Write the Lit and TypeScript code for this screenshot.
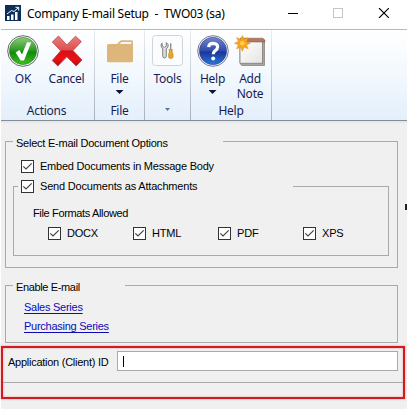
import { LitElement, html, svg, css } from "lit";
import { customElement, property } from "lit/decorators.js";

@customElement("check-item")
class CheckItem extends LitElement {
  @property() label = "";
  static styles = css`
    :host { display: flex; align-items: center; height: 13px; white-space: nowrap; }
    svg { flex: none; width: 13px; height: 13px; }
    .text { margin-left: 6px; line-height: 13px; }
  `;
  render() {
    return html`<svg viewBox="0 0 13 13">
        <rect x=".5" y=".5" width="12" height="12" fill="#fff" stroke="#333" />
        <path d="M2.3 6.3 5 9 10.7 3.3" fill="none" stroke="#444" stroke-width="1.2" />
      </svg><span class="text">${this.label}</span>`;
  }
}

const okIcon = svg`
  <defs>
    <linearGradient id="g" x2="0" y2="1"><stop stop-color="#8fc97c"/><stop offset=".45" stop-color="#2f9e25"/><stop offset=".55" stop-color="#128a0c"/><stop offset="1" stop-color="#3fc01e"/></linearGradient>
  </defs>
  <circle cx="16" cy="16" r="15.3" fill="#fff" stroke="#555" stroke-width=".9"/>
  <circle cx="16" cy="16" r="13.6" fill="url(#g)" stroke="#277a22" stroke-width=".6"/>
  <path d="M8.6 17.4 12.4 15 15 19.4 20 7.2 24.2 7.4 17 25.4 13.6 25.4Z" fill="#fff"/>`;

const cancelIcon = svg`
  <defs>
    <linearGradient id="r" x2="0" y2="1"><stop stop-color="#e98080"/><stop offset=".46" stop-color="#e04f4f"/><stop offset=".5" stop-color="#d31116"/><stop offset=".75" stop-color="#ed1113"/><stop offset="1" stop-color="#a80e12"/></linearGradient>
  </defs>
  <path d="M7.5 1 15.8 10 24.5 1.2 30.3 6.6 22 15.6 31 25 25.2 31 15.8 21.8 6.8 31 1.2 25.5 9.7 15.8 1.3 7Z" fill="url(#r)" stroke="#b84347" stroke-width=".8" stroke-linejoin="round"/>`;

const folderIcon = svg`
  <path d="M3 10.5Q3 9 4.5 9H13L15.7 6.2Q16.4 5.3 17.5 5.3H27.5Q29 5.3 29 7V26Q29 27.3 27.7 27.3H4.3Q3 27.3 3 26Z" fill="#dcb67a"/>
  <path d="M15.6 9 17.5 7H27.4V9Z" fill="#f4f8fc"/>`;

const toolsIcon = svg`
  <rect x=".5" y=".5" width="30" height="30" rx="3" fill="#fbfcfe" stroke="#d0d4da"/>
  <path d="M10.2 8.2V11L12.2 12.4 14.3 11V7.6Q17 9 16 12L14.3 14V21Q14 23 12.4 23T10.7 21V14Q8.5 12 9.2 9Z" fill="#ddd" stroke="#666" stroke-width=".8"/>
  <path d="M18.7 8.3V14" stroke="#888" stroke-width="1.3"/>
  <path d="M17.1 14.5H20.4L19.9 17 21 19V22Q21 23.4 18.8 23.4T16.7 22V19L17.6 17Z" fill="#eda91b" stroke="#a8751c" stroke-width=".6"/>`;

const helpIcon = svg`
  <defs>
    <linearGradient id="b" x2="0" y2="1"><stop stop-color="#7385cd"/><stop offset=".48" stop-color="#324cae"/><stop offset=".54" stop-color="#1c3699"/><stop offset="1" stop-color="#2878d8"/></linearGradient>
  </defs>
  <circle cx="16" cy="16" r="15.3" fill="#fff" stroke="#667" stroke-width=".9"/>
  <circle cx="16" cy="16" r="13.7" fill="url(#b)" stroke="#25378c" stroke-width=".5"/>
  <path d="M11.6 12.2Q12 8.4 16.2 8.4 20.6 8.6 20.6 12 20.6 14 18.2 15.6 16.2 16.8 16.2 19.3" fill="none" stroke="#fff" stroke-width="3.2"/>
  <circle cx="16.2" cy="23.6" r="2" fill="#fff"/>`;

const noteIcon = svg`
  <defs>
    <linearGradient id="n" x2="1" y2="1"><stop stop-color="#fff"/><stop offset="1" stop-color="#e4e4e2"/></linearGradient>
  </defs>
  <path d="M6 5H30.5V30.5H7.5L6 28Z" fill="#aaa49f" stroke="#8d8580" stroke-width=".8"/>
  <path d="M6 6.2H28.5V28.3H6Z" fill="url(#n)" stroke="#77706a" stroke-width=".7"/>
  <path d="M6 3.2H29L30.8 5.2V7H6Z" fill="#b17a60" stroke="#80503c" stroke-width=".5"/>
  <path d="M8.4 .5 10.1 4.4 14 2.6 12.5 6.5 16.5 8.2 12.5 9.9 14.2 13.8 10.1 12.2 8.4 16.2 6.6 12.2 2.6 13.8 4.4 9.8 .5 8.2 4.4 6.5 2.6 2.6 6.6 4.4Z" fill="#f7a51d" stroke="#e38b17" stroke-width=".5"/>
  <circle cx="8.3" cy="8.2" r="2.2" fill="#ffd34d"/>`;

@customElement("app-root")
class AppRoot extends LitElement {
  static styles = css`
    * { box-sizing: border-box; }
    :host {
      display: flex; flex-direction: column; position: relative; overflow: hidden;
      width: 407px; height: 410px; background: #fff; color: #000;
      font: 11px/13px "Liberation Sans", sans-serif;
    }
    .titlebar { display: flex; align-items: center; height: 29px; flex: none; padding-left: 5px; }
    .logo { width: 16px; height: 16px; margin-top: -3px; flex: none; }
    .title { margin: -2px 0 0 6px; font: 12px/16px "Noto Sans", sans-serif; white-space: pre; letter-spacing: -0.27px; }
    .controls { margin-left: auto; margin-right: 18px; width: 101px; height: 10px; margin-top: -3px; }
    .ribbon {
      display: flex; flex: none; height: 92px; margin-left: 1px; color: #171c55;
      border-top: 1px solid #b5b8ba; border-bottom: 1px solid #858e98;
      background: linear-gradient(#fff, #f4f9fe 45%, #e3effb);
      font: 12px/15px "Noto Sans", sans-serif; letter-spacing: -0.25px;
    }
    .group { display: flex; flex-direction: column; border-right: 1px solid; border-image: linear-gradient(#e9eef3, #a9b1bc) 1; }
    .tools { display: flex; height: 73px; padding-top: 5px; }
    .tool { display: flex; flex-direction: column; align-items: center; text-align: center; }
    .icon { width: 32px; height: 32px; display: block; flex: none; }
    .tool .name { margin-top: 4px; white-space: pre; }
    .caption { text-align: center; height: 15px; }
    .arrow { width: 8px; height: 4px; margin-top: 4px; background: #10143c; clip-path: polygon(0 0, 100% 0, 50% 100%); }
    .arrow.small { width: 5px; height: 3px; margin: 5px auto 0; background: #5d7499; }
    .g-actions { width: 94px; padding-left: 5px; }
    .g-actions .tool { width: 34px; }
    .g-actions .tool + .tool { width: 53px; }
    .g-actions .caption { padding-right: 7px; }
    .g-file { width: 50px; align-items: center; }
    .g-tools { width: 46px; align-items: center; }
    .g-help { width: 81px; }
    .g-help .tool { width: 43px; }
    .g-help .tool + .tool { width: 32px; }
    .client { flex: none; display: flow-root; height: 288px; margin-left: 1px; background: linear-gradient(#e2e4e7, #f0f0f0 3px); }
    .box { border: 1px solid #a9a9a9; position: relative; }
    .box::before { content: ""; position: absolute; top: -1px; height: 1px; background: #f0f0f0; }
    .outer { margin: 20px 0 0 4px; width: 393px; height: 127px; }
    .outer::before { left: 7px; width: 210px; }
    .legend { position: relative; height: 13px; padding-left: 10px; white-space: nowrap; letter-spacing: -0.24px; }
    .outer > .legend { margin-top: -5px; }
    .embed { margin: 10px 0 0 15px; letter-spacing: -0.23px; }
    .inner { margin: 13px 0 0 7px; width: 376px; height: 70px; }
    .inner::before { left: 4px; width: 275px; }
    .send { position: relative; margin: -7px 0 0 7px; letter-spacing: -0.18px; }
    .formats { margin: 14px 0 0 19px; letter-spacing: -0.35px; }
    .row { display: grid; grid-template-columns: repeat(4, 85px); margin: 7px 0 0 34px; letter-spacing: -0.2px; }
    .enable { margin: 17px 0 0 4px; width: 393px; height: 58px; }
    .enable::before { left: 7px; width: 112px; }
    .enable .legend { margin-top: -5px; letter-spacing: -0.36px; }
    .link { display: block; width: max-content; margin: 7px 0 0 18px; height: 13px; color: #0b0bb8; text-decoration: underline; text-underline-offset: 1.5px; letter-spacing: -0.26px; }
    .link + .link { margin-top: 6px; }
    .highlight { margin-top: 3px; width: 404px; height: 53px; border: 2px solid #cf1c20; box-shadow: 0 0 2px #e88, inset 0 0 2px #e88; }
    .field { display: flex; align-items: center; padding: 3px 0 0 5px; height: 23px; }
    .field .label { width: 109px; white-space: nowrap; margin-top: 2px; letter-spacing: -0.26px; }
    .input { width: 281px; height: 20px; flex: none; background: #fff; border: 1px solid #a9a9a9; padding: 4px 0 0 5px; }
    .caret { width: 1px; height: 11px; background: #000; }
    .rule { margin-top: 11px; height: 1px; background: #a9a9a9; }
    .mark { position: absolute; left: 405px; top: 204px; width: 2px; height: 6px; background: #222; }
  `;

  icon(art: unknown) {
    return html`<svg class="icon" viewBox="0 0 32 32">${art}</svg>`;
  }

  render() {
    return html`
      <div class="titlebar">
        <svg class="logo" viewBox="0 0 16 16">
          <rect width="16" height="16" fill="#0c2f59" />
          <path d="M2 15V11H4.5V15ZM6 15V9.5H8.5V15ZM10 15V7H12.5V15Z" fill="#fff" />
          <path d="M2 9 6.5 5.5 9 6.5 13.5 2.5M10.5 2.3H13.7V5.5" fill="none" stroke="#fff" />
        </svg>
        <span class="title">Company E-mail Setup  -  TWO03 (sa)</span>
        <svg class="controls" viewBox="0 0 101 10">
          <path d="M0 5.5H10" stroke="#000" />
          <rect x="45.5" y=".5" width="9" height="9" fill="none" stroke="#c6c6c6" />
          <path d="M91 0 101 10M101 0 91 10" stroke="#000" stroke-width="1.1" />
        </svg>
      </div>
      <div class="ribbon">
        <div class="group g-actions">
          <div class="tools">
            <div class="tool">${this.icon(okIcon)}<span class="name">OK</span></div>
            <div class="tool">${this.icon(cancelIcon)}<span class="name">Cancel</span></div>
          </div>
          <div class="caption">Actions</div>
        </div>
        <div class="group g-file">
          <div class="tools"><div class="tool">${this.icon(folderIcon)}<span class="name">File</span><i class="arrow"></i></div></div>
          <div class="caption">File</div>
        </div>
        <div class="group g-tools">
          <div class="tools"><div class="tool">${this.icon(toolsIcon)}<span class="name">Tools</span></div></div>
          <div class="caption"><div class="arrow small"></div></div>
        </div>
        <div class="group g-help">
          <div class="tools">
            <div class="tool">${this.icon(helpIcon)}<span class="name">Help</span><i class="arrow"></i></div>
            <div class="tool">${this.icon(noteIcon)}<span class="name">Add
Note</span></div>
          </div>
          <div class="caption">Help</div>
        </div>
      </div>
      <div class="client">
        <div class="box outer">
          <div class="legend">Select E-mail Document Options</div>
          <check-item class="embed" label="Embed Documents in Message Body"></check-item>
          <div class="box inner">
            <check-item class="send" label="Send Documents as Attachments"></check-item>
            <div class="formats">File Formats Allowed</div>
            <div class="row">
              ${["DOCX", "HTML", "PDF", "XPS"].map((f) => html`<check-item label=${f}></check-item>`)}
            </div>
          </div>
        </div>
        <div class="box enable">
          <div class="legend">Enable E-mail</div>
          <a class="link">Sales Series</a>
          <a class="link">Purchasing Series</a>
        </div>
        <div class="highlight">
          <div class="field">
            <span class="label">Application (Client) ID</span>
            <div class="input"><div class="caret"></div></div>
          </div>
          <div class="rule"></div>
        </div>
      </div>
      <div class="mark"></div>
    `;
  }
}
